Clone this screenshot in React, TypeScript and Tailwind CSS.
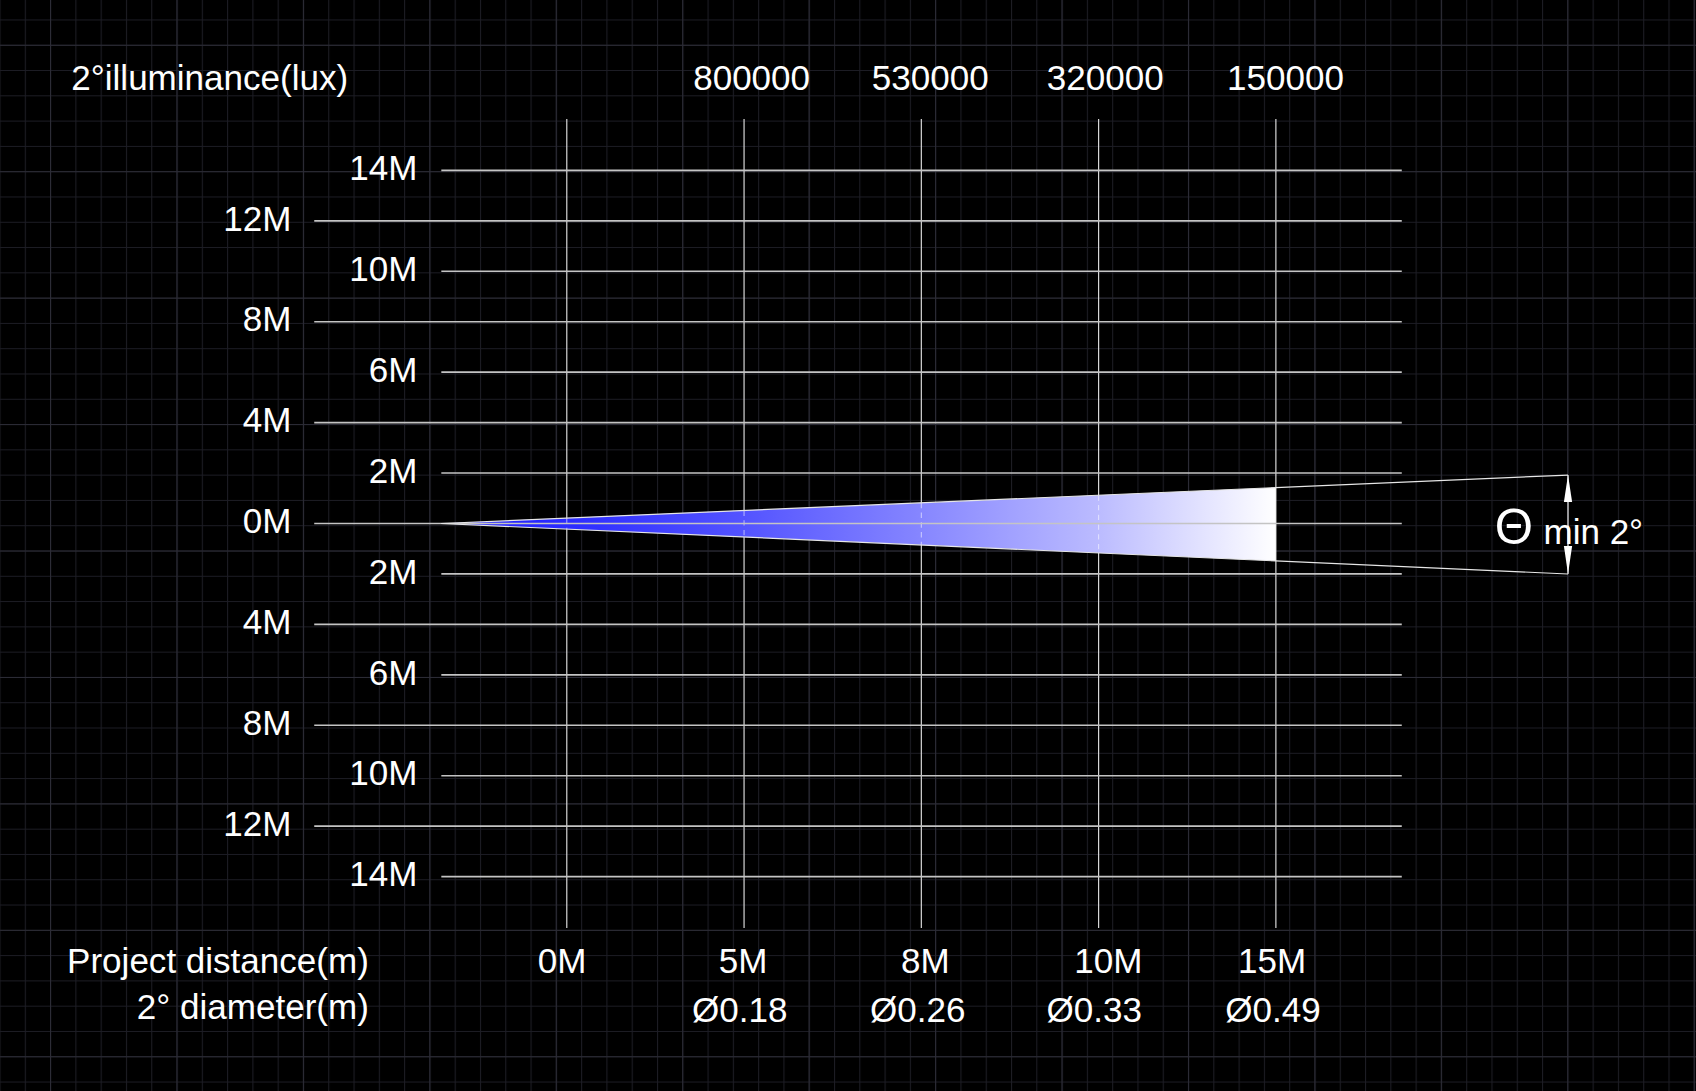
import React from "react";

// chart drawn in a 1568-wide coordinate space, scaled to the 1696px frame
const W = 1568;
const H = 1008.7;

const Y0 = 484;
const DY = 46.64;
const ROWS = [14, 12, 10, 8, 6, 4, 2, 0, 2, 4, 6, 8, 10, 12, 14];
const COLS = [524, 687.9, 851.8, 1015.7, 1179.6];

const TOP_VALUES = [
  { x: 694.9, label: "800000" },
  { x: 860, label: "530000" },
  { x: 1021.8, label: "320000" },
  { x: 1188.5, label: "150000" },
];

const DISTANCES = [
  { x: 519.7, label: "0M" },
  { x: 687, label: "5M" },
  { x: 855.5, label: "8M" },
  { x: 1024.7, label: "10M" },
  { x: 1176.2, label: "15M" },
];

const DIAMETERS = [
  { x: 683.9, label: "Ø0.18" },
  { x: 848.5, label: "Ø0.26" },
  { x: 1011.6, label: "Ø0.33" },
  { x: 1177, label: "Ø0.49" },
];

const TIP = { x: 408, y: 484 };
const CONE_END = { x: 1449.7, top: 439.2, bottom: 530.7 };

function coneY(x: number, edge: number) {
  const t = (x - TIP.x) / (CONE_END.x - TIP.x);
  return TIP.y + (edge - TIP.y) * t;
}

function Label({
  x,
  y,
  children,
  anchor = "middle",
  size = 32.4,
}: {
  x: number;
  y: number;
  children: React.ReactNode;
  anchor?: "start" | "middle" | "end";
  size?: number;
}) {
  return (
    <text x={x} y={y} fontSize={size} textAnchor={anchor} fill="#ffffff">
      {children}
    </text>
  );
}

export default function App() {
  const beamRight = COLS[4];
  const beamTop = coneY(beamRight, CONE_END.top);
  const beamBottom = coneY(beamRight, CONE_END.bottom);

  return (
    <div className="h-[1091px] w-[1696px] overflow-hidden bg-black">
      <svg
        className="block h-full w-full"
        viewBox={`0 0 ${W} ${H}`}
        fontFamily="'Liberation Sans', Arial, Helvetica, sans-serif"
      >
        <defs>
          <pattern
            id="grid-minor"
            x={-0.5}
            y={18}
            width={23.38}
            height={23.38}
            patternUnits="userSpaceOnUse"
          >
            <path d="M0.5 0V23.38M0 0.5H23.38" stroke="#1d1d25" strokeWidth={0.95} fill="none" />
          </pattern>
          <pattern
            id="grid-major"
            x={46.2}
            y={41.4}
            width={116.9}
            height={116.9}
            patternUnits="userSpaceOnUse"
          >
            <path d="M0.5 0V116.9M0 0.5H116.9" stroke="#2c2c36" strokeWidth={0.95} fill="none" />
          </pattern>
          <linearGradient
            id="beam"
            x1={TIP.x}
            y1={0}
            x2={beamRight}
            y2={0}
            gradientUnits="userSpaceOnUse"
          >
            <stop offset="0" stopColor="#1c1cff" />
            <stop offset="0.15" stopColor="#2b2bff" />
            <stop offset="0.36" stopColor="#5353ff" />
            <stop offset="0.57" stopColor="#8585ff" />
            <stop offset="0.79" stopColor="#bcbcff" />
            <stop offset="1" stopColor="#ffffff" />
          </linearGradient>
        </defs>

        {/* background grid */}
        <rect width={W} height={H} fill="#000000" />
        <rect width={W} height={H} fill="url(#grid-minor)" />
        <rect width={W} height={H} fill="url(#grid-major)" />

        {/* vertical distance lines */}
        {COLS.map((x) => (
          <line key={x} x1={x} y1={110} x2={x} y2={858} stroke="#d9d9d9" strokeWidth={1.1} />
        ))}

        {/* beam */}
        <polygon
          points={`${TIP.x},${TIP.y} ${beamRight},${beamTop} ${beamRight},${beamBottom}`}
          fill="url(#beam)"
        />
        {COLS.slice(0, 4).map((x) => (
          <line
            key={x}
            x1={x}
            y1={coneY(x, CONE_END.top)}
            x2={x}
            y2={coneY(x, CONE_END.bottom)}
            stroke="#ffffff"
            strokeOpacity={0.55}
            strokeWidth={1}
            strokeDasharray="5 4"
          />
        ))}

        {/* horizontal scale lines */}
        {ROWS.map((v, i) => {
          const y = Y0 + (i - 7) * DY;
          const short = i % 2 === 0;
          return (
            <g key={i}>
              <line
                x1={short ? 408 : 290.5}
                y1={y}
                x2={1296}
                y2={y}
                stroke="#c4c4c4"
                strokeWidth={1.5}
              />
              <Label x={short ? 386 : 269.5} y={y + 9} anchor="end">
                {v}M
              </Label>
            </g>
          );
        })}

        {/* cone edges */}
        <line x1={TIP.x} y1={TIP.y} x2={CONE_END.x} y2={CONE_END.top} stroke="#e6e6e6" strokeWidth={1.1} />
        <line x1={TIP.x} y1={TIP.y} x2={CONE_END.x} y2={CONE_END.bottom} stroke="#e6e6e6" strokeWidth={1.1} />

        {/* angle arrow */}
        <line x1={CONE_END.x} y1={CONE_END.top} x2={CONE_END.x} y2={CONE_END.bottom} stroke="#ffffff" strokeWidth={1} />
        <polygon
          points={`${CONE_END.x},${CONE_END.top} ${CONE_END.x - 3.8},${CONE_END.top + 25} ${CONE_END.x + 3.8},${CONE_END.top + 25}`}
          fill="#ffffff"
        />
        <polygon
          points={`${CONE_END.x},${CONE_END.bottom} ${CONE_END.x - 3.8},${CONE_END.bottom - 26} ${CONE_END.x + 3.8},${CONE_END.bottom - 26}`}
          fill="#ffffff"
        />
        <Label x={1382} y={502.6} anchor="start" size={45.5}>
          Θ
        </Label>
        <Label x={1427} y={503.2} anchor="start">
          min 2°
        </Label>

        {/* top row */}
        <Label x={65.9} y={83.2} anchor="start">
          2°illuminance(lux)
        </Label>
        {TOP_VALUES.map((t) => (
          <Label key={t.label} x={t.x} y={83.2}>
            {t.label}
          </Label>
        ))}

        {/* bottom rows */}
        <Label x={341} y={899.3} anchor="end">
          Project distance(m)
        </Label>
        <Label x={341} y={942.4} anchor="end">
          2° diameter(m)
        </Label>
        {DISTANCES.map((d) => (
          <Label key={d.label} x={d.x} y={899.9}>
            {d.label}
          </Label>
        ))}
        {DIAMETERS.map((d) => (
          <Label key={d.label} x={d.x} y={945.2}>
            {d.label}
          </Label>
        ))}
      </svg>
    </div>
  );
}
